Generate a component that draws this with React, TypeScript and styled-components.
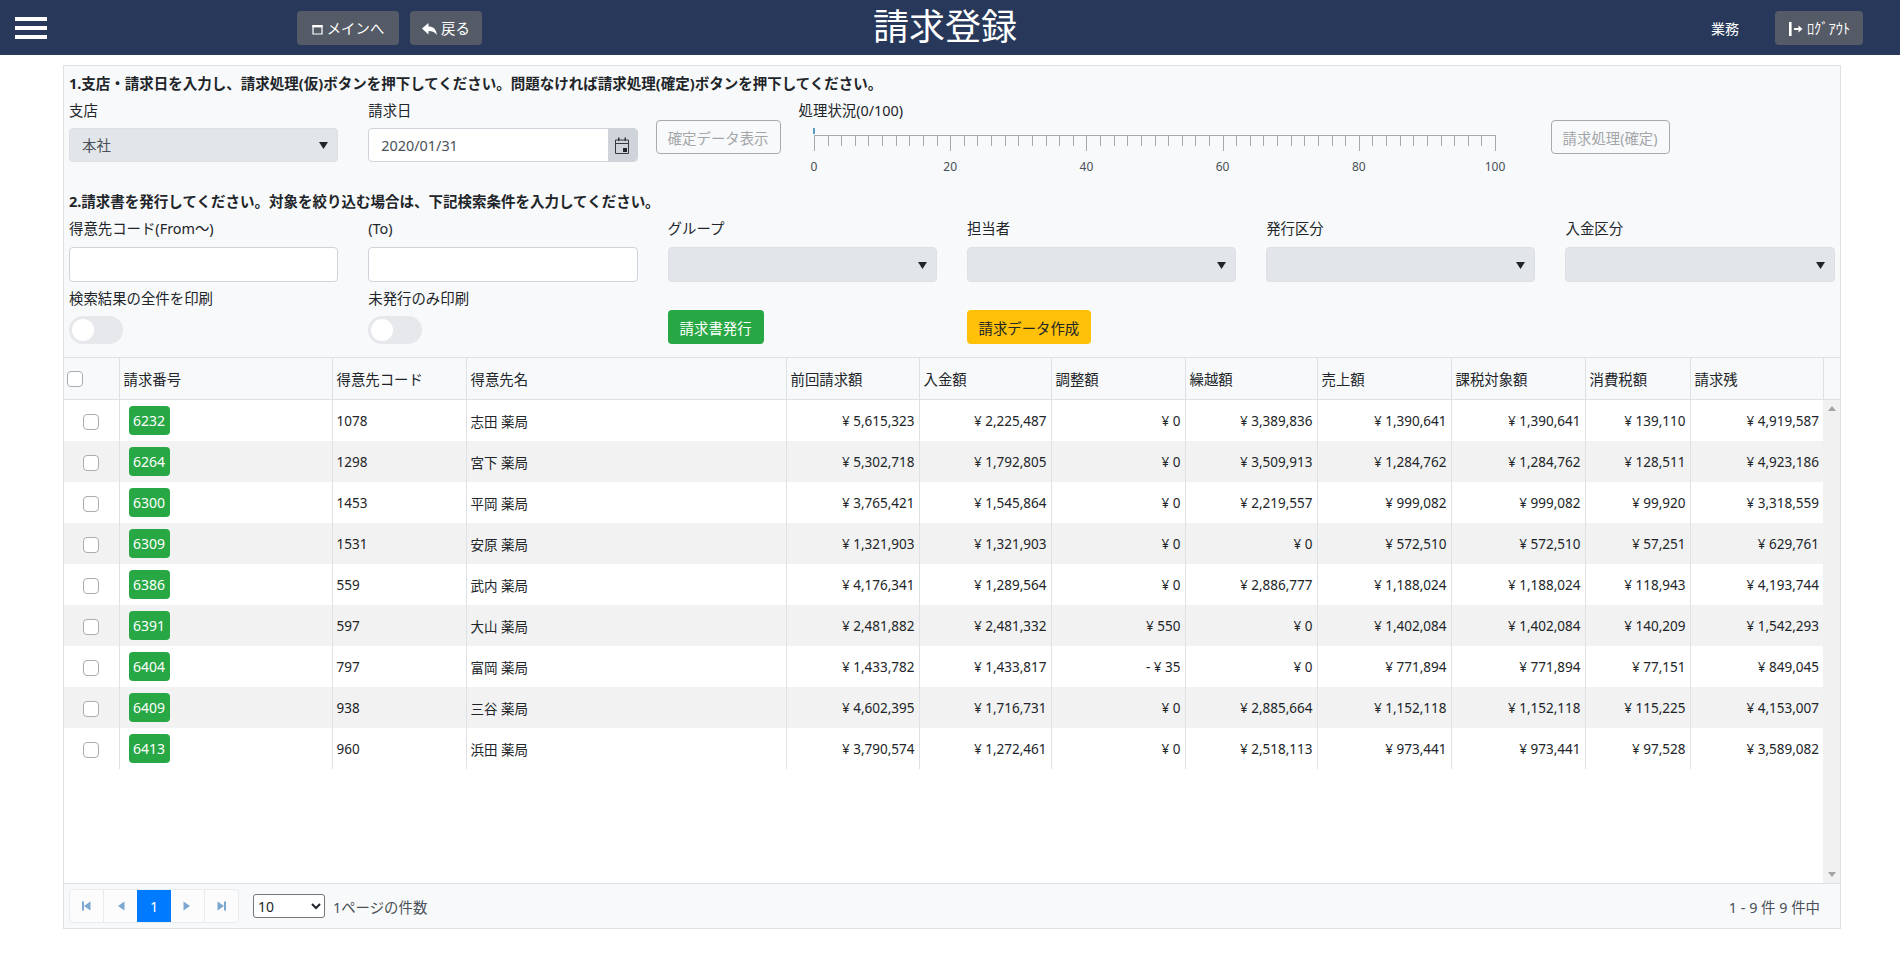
import React from "react";
import styled, { createGlobalStyle } from "styled-components";

const Global = createGlobalStyle`
  html, body { margin: 0; padding: 0; background: #fff; overflow: hidden; }
  body { font-family: "Noto Sans", "Noto Sans CJK JP", sans-serif; font-size: 14.4px; color: #212529; }
  * { box-sizing: border-box; }
`;

const Page = styled.div`
  width: 1900px;
  height: 960px;
  display: flex;
  flex-direction: column;
`;

const Header = styled.header`
  height: 55px;
  flex: none;
  background: #27385a;
  position: relative;
  display: flex;
  align-items: center;
  padding-left: 15px;
  padding-right: 37px;
`;

const Burger = styled.div`
  width: 32px;
  height: 22px;
  display: flex;
  flex-direction: column;
  justify-content: space-between;
  margin-right: 250px;
  span { display: block; height: 4px; background: #fff; }
`;

const HeadButton = styled.button`
  height: 34px;
  border: 0;
  border-radius: 4px;
  background: #555b66;
  color: #fff;
  font: inherit;
  display: inline-flex;
  align-items: center;
  justify-content: center;
  gap: 4px;
  padding: 0;
  width: ${(p: { $w: number }) => p.$w}px;
  margin-right: 11px;
  svg { position: relative; top: 1px; }
`;

const Title = styled.h1`
  position: absolute;
  left: 0;
  right: 10px;
  top: 0;
  height: 55px;
  margin: 0;
  text-align: center;
  font-size: 36px;
  font-weight: 400;
  line-height: 54px;
  color: #fff;
  pointer-events: none;
`;

const HeadRight = styled.div`
  margin-left: auto;
  display: flex;
  align-items: center;
  color: #fff;
  span { margin-right: 36px; font-size: 14px; }
  button { margin-right: 0; }
`;

const Panel = styled.main`
  margin: 10px 0 0 63px;
  width: 1778px;
  height: 864px;
  border: 1px solid #dee2e6;
  background: #f8f9fa;
  display: flex;
  flex-direction: column;
`;

const Form = styled.section`
  height: 291px;
  flex: none;
  padding: 7px 5px 0 5px;
`;

const Heading = styled.div`
  font-weight: 700;
  font-size: 14.5px;
  line-height: 21px;
  color: #212529;
`;

const TopRow = styled.div`
  display: flex;
  margin-top: 6px;
  height: 85px;
`;

const Field = styled.div`
  width: 269.3px;
  flex: none;
  margin-right: 30px;
`;

const Label = styled.label`
  display: block;
  line-height: 21px;
  height: 21px;
  margin-bottom: 7px;
  color: #212529;
  white-space: nowrap;
`;

const LowLabel = styled(Label)`
  margin-bottom: 8px;
`;

const SelectWrap = styled.div`
  position: relative;
  height: ${(p: { $h: number }) => p.$h}px;
  svg { position: absolute; right: 10px; top: 50%; margin-top: -3px; pointer-events: none; }
`;

const GreySelect = styled.select`
  appearance: none;
  width: 100%;
  height: 100%;
  border: 1px solid #dde0e4;
  border-radius: 4px;
  background: #e2e5e9;
  color: #495057;
  font: inherit;
  padding: 0 12px;
`;

const DateBox = styled.div`
  height: 34px;
  display: flex;
  border: 1px solid #ced4da;
  border-radius: 4px;
  overflow: hidden;
  background: #fff;
`;

const DateInput = styled.input`
  flex: 1;
  min-width: 0;
  border: 0;
  outline: 0;
  background: transparent;
  font: inherit;
  color: #495057;
  padding: 0 12px;
`;

const DateAddon = styled.span`
  width: 29px;
  background: #ced4da;
  display: flex;
  align-items: center;
  justify-content: center;
`;

const GhostButton = styled.button`
  width: ${(p: { $w: number }) => p.$w}px;
  height: 34px;
  flex: none;
  margin-top: 20px;
  border: 1px solid #a8abae;
  border-radius: 4px;
  background: transparent;
  color: #a3a6a9;
  font: inherit;
  padding: 0;
`;

const ConfirmShow = styled(GhostButton)`
  margin-left: -12px;
`;

const Progress = styled.div`
  width: 752px;
  flex: none;
  margin-left: 18px;
  svg { display: block; }
`;

const ProgressLabel = styled.div`
  line-height: 21px;
  height: 21px;
  white-space: nowrap;
`;

const Heading2 = styled(Heading)`
  margin-top: 6px;
`;

const FilterGrid = styled.div`
  display: grid;
  grid-template-columns: repeat(6, 269.3px);
  column-gap: 30px;
  margin-top: 6px;
`;

const TextInput = styled.input`
  display: block;
  width: 100%;
  height: 35px;
  border: 1px solid #ced4da;
  border-radius: 4px;
  background: #fff;
`;

const Toggle = styled.span`
  display: block;
  width: 54px;
  height: 28px;
  border-radius: 14px;
  background: #e6e8eb;
  position: relative;
  margin-top: -1px;
  &::after {
    content: "";
    position: absolute;
    left: 3px;
    top: 3px;
    width: 22px;
    height: 22px;
    border-radius: 50%;
    background: #fff;
  }
`;

const ToggleLabel = styled(LowLabel)`
  margin-top: 6px;
`;

const ActionCell = styled.div`
  margin-top: 28px;
`;

const Action = styled.button`
  height: 34px;
  border: 0;
  border-radius: 4px;
  font: inherit;
  padding: 0;
  width: ${(p: { $w: number }) => p.$w}px;
  background: ${(p: { $bg: string; $fg: string; $w: number }) => p.$bg};
  color: ${(p) => p.$fg};
`;

const Table = styled.table`
  table-layout: fixed;
  border-collapse: collapse;
  width: ${(p: { $w: number }) => p.$w}px;
`;

const HeadTh = styled.th`
  height: 42px;
  padding: 0 3px 0 4px;
  font-weight: 400;
  text-align: left;
  font-size: 14.4px;
  background: #f8f9fa;
  border-top: 1px solid #dee2e6;
  border-bottom: 1px solid #dee2e6;
  border-right: 1px solid #dee2e6;
  white-space: nowrap;
`;

const Check = styled.input.attrs({ type: "checkbox" })`
  appearance: none;
  display: block;
  width: 16px;
  height: 16px;
  margin: 0;
  background: #fff;
  border: 1px solid #a9adb1;
  border-radius: 4px;
`;

const HeadCheck = styled(Check)`
  margin-left: -1px;
`;

const RowCheck = styled(Check)`
  margin-top: 2px;
`;

const BodyArea = styled.div`
  flex: 1;
  min-height: 0;
  display: flex;
  background: #fff;
`;

const BodyScroll = styled.div`
  flex: 1;
  min-width: 0;
`;

const Row = styled.tr`
  background: ${(p: { $alt: boolean }) => (p.$alt ? "#f2f2f2" : "#fff")};
`;

const Td = styled.td`
  height: 41px;
  padding: 0 4px 0 4px;
  font-size: 13.5px;
  color: #212529;
  border-right: 1px solid #dee2e6;
  white-space: nowrap;
  text-align: ${(p: { $num?: boolean }) => (p.$num ? "right" : "left")};
  &:last-child { border-right: 0; }
`;

const CheckTd = styled(Td)`
  padding: 0 0 0 19px;
`;

const IdBadge = styled.button`
  display: block;
  width: 41px;
  height: 29px;
  margin: -1px 0 0 5px;
  border: 0;
  border-radius: 4px;
  background: #28a745;
  color: #fff;
  font: inherit;
  font-size: 14px;
  padding: 0;
`;

const Scrollbar = styled.div`
  width: 17px;
  flex: none;
  background: #f1f1f1;
  display: flex;
  flex-direction: column;
  justify-content: space-between;
  align-items: center;
  padding: 6px 0;
`;

const Arrow = styled.span`
  width: 0;
  height: 0;
  border-left: 4px solid transparent;
  border-right: 4px solid transparent;
  ${(p: { $up?: boolean }) =>
    p.$up ? "border-bottom: 5px solid #a3a3a3;" : "border-top: 5px solid #a3a3a3;"}
`;

const Footer = styled.footer`
  height: 45px;
  flex: none;
  border-top: 1px solid #dee2e6;
  background: #f8f9fa;
  display: flex;
  align-items: center;
  padding: 0 20px 0 5px;
`;

const Pager = styled.div`
  display: flex;
  width: 170px;
  height: 34px;
  border: 1px solid #e9ecef;
  border-radius: 4px;
  background: #fcfcfd;
  overflow: hidden;
`;

const PageCell = styled.span`
  flex: 1;
  display: flex;
  align-items: center;
  justify-content: center;
  border-left: ${(p: { $active?: boolean; $first?: boolean }) =>
    p.$first || p.$active ? "0" : "1px solid #e9ecef"};
  background: ${(p) => (p.$active ? "#007bff" : "transparent")};
  color: ${(p) => (p.$active ? "#fff" : "#7ba7d0")};
`;

const PageSize = styled.select`
  width: 72px;
  height: 24px;
  margin-left: 14px;
  border: 1px solid #767676;
  border-radius: 3px;
  background: #fff;
  font-family: "Noto Sans", sans-serif;
  font-size: 14px;
  color: #212529;
`;

const PageSizeLabel = styled.span`
  margin-left: 8px;
  color: #495057;
`;

const PageInfo = styled.span`
  margin-left: auto;
  color: #495057;
`;

const widths = [55, 213, 134, 320, 133, 132, 134, 132, 134, 134, 105, 133];
const heads = ["", "請求番号", "得意先コード", "得意先名", "前回請求額", "入金額", "調整額", "繰越額", "売上額", "課税対象額", "消費税額", "請求残"];

const rows: string[][] = [
  ["6232", "1078", "志田 薬局", "¥ 5,615,323", "¥ 2,225,487", "¥ 0", "¥ 3,389,836", "¥ 1,390,641", "¥ 1,390,641", "¥ 139,110", "¥ 4,919,587"],
  ["6264", "1298", "宮下 薬局", "¥ 5,302,718", "¥ 1,792,805", "¥ 0", "¥ 3,509,913", "¥ 1,284,762", "¥ 1,284,762", "¥ 128,511", "¥ 4,923,186"],
  ["6300", "1453", "平岡 薬局", "¥ 3,765,421", "¥ 1,545,864", "¥ 0", "¥ 2,219,557", "¥ 999,082", "¥ 999,082", "¥ 99,920", "¥ 3,318,559"],
  ["6309", "1531", "安原 薬局", "¥ 1,321,903", "¥ 1,321,903", "¥ 0", "¥ 0", "¥ 572,510", "¥ 572,510", "¥ 57,251", "¥ 629,761"],
  ["6386", "559", "武内 薬局", "¥ 4,176,341", "¥ 1,289,564", "¥ 0", "¥ 2,886,777", "¥ 1,188,024", "¥ 1,188,024", "¥ 118,943", "¥ 4,193,744"],
  ["6391", "597", "大山 薬局", "¥ 2,481,882", "¥ 2,481,332", "¥ 550", "¥ 0", "¥ 1,402,084", "¥ 1,402,084", "¥ 140,209", "¥ 1,542,293"],
  ["6404", "797", "富岡 薬局", "¥ 1,433,782", "¥ 1,433,817", "- ¥ 35", "¥ 0", "¥ 771,894", "¥ 771,894", "¥ 77,151", "¥ 849,045"],
  ["6409", "938", "三谷 薬局", "¥ 4,602,395", "¥ 1,716,731", "¥ 0", "¥ 2,885,664", "¥ 1,152,118", "¥ 1,152,118", "¥ 115,225", "¥ 4,153,007"],
  ["6413", "960", "浜田 薬局", "¥ 3,790,574", "¥ 1,272,461", "¥ 0", "¥ 2,518,113", "¥ 973,441", "¥ 973,441", "¥ 97,528", "¥ 3,589,082"],
];

const Caret = () => (
  <svg width="9" height="7" viewBox="0 0 9 7"><path d="M0 0h9L4.5 7z" fill="#212529" /></svg>
);

const WindowIcon = () => (
  <svg width="11" height="12" viewBox="0 0 11 12" fill="none">
    <path d="M1 2.5h9v8.5H1z" stroke="#fff" strokeWidth="1.2" />
    <path d="M.5 2h10v2.4H.5z" fill="#fff" />
  </svg>
);

const ReplyIcon = () => (
  <svg width="15" height="14" viewBox="0 0 15 14">
    <path d="M0 6.5 6.5 1v3.4C11 4.4 14 6.5 15 13 13 10.2 10.5 9 6.5 9v3.5z" fill="#fff" />
  </svg>
);

const LogoutIcon = () => (
  <svg width="15" height="16" viewBox="0 0 15 16">
    <path d="M1 1h2.6v14H1z" fill="#fff" />
    <path d="M6 7h4.5V4.5L14.5 8l-4 3.5V9H6z" fill="#fff" />
  </svg>
);

const CalendarIcon = () => (
  <svg width="14" height="17" viewBox="0 0 14 17" fill="none">
    <path d="M.5 3h13v13.5H.5zM.5 6.5h13" stroke="#343a40" />
    <path d="M3 .5h1.5V4H3zM9.5 .5H11V4H9.5z" fill="#343a40" />
    <path d="M8 11h4v4H8z" fill="#212529" />
  </svg>
);

const PagerIcon = ({ dir, bar }: { dir: "l" | "r"; bar?: boolean }) => (
  <svg width="10" height="10" viewBox="0 0 10 10" fill="#7ba7d0">
    {dir === "l" ? <path d="M8.5 .5v9L2 5z" /> : <path d="M1.5 .5v9L8 5z" />}
    {bar && (dir === "l" ? <path d="M0 .5h2v9H0z" /> : <path d="M8 .5h2v9H8z" />)}
  </svg>
);

const Scale = () => {
  const left = 15;
  const step = 13.62;
  const ticks = Array.from({ length: 51 }, (_, i) => i);
  return (
    <svg width="720" height="56" viewBox="0 0 720 56">
      <rect x={left - 1} y="7" width="2" height="6" fill="#5b9bc4" />
      <path d={`M${left} 14.5H${left + 50 * step}`} stroke="#a8a8a8" />
      {ticks.map((i) => {
        const x = Math.round(left + i * step) + 0.5;
        return <path key={i} d={`M${x} 14V${i % 10 === 0 ? 30 : 25}`} stroke="#a8a8a8" />;
      })}
      {[0, 20, 40, 60, 80, 100].map((v, i) => (
        <text key={v} x={left + i * 10 * step} y="50" textAnchor="middle" fontSize="12" fill="#495057" fontFamily="Noto Sans, sans-serif">{v}</text>
      ))}
    </svg>
  );
};

const Select = ({ h, value }: { h: number; value?: string }) => (
  <SelectWrap $h={h}>
    <GreySelect defaultValue={value ?? ""}>
      <option value={value ?? ""}>{value ?? ""}</option>
    </GreySelect>
    <Caret />
  </SelectWrap>
);

export default function App() {
  return (
    <Page>
      <Global />
      <Header>
        <Burger><span /><span /><span /></Burger>
        <HeadButton $w={102}><WindowIcon />メインへ</HeadButton>
        <HeadButton $w={72}><ReplyIcon />戻る</HeadButton>
        <Title>請求登録</Title>
        <HeadRight>
          <span>業務</span>
          <HeadButton $w={88}><LogoutIcon />ﾛｸﾞｱｳﾄ</HeadButton>
        </HeadRight>
      </Header>
      <Panel>
        <Form>
          <Heading>1.支店・請求日を入力し、請求処理(仮)ボタンを押下してください。問題なければ請求処理(確定)ボタンを押下してください。</Heading>
          <TopRow>
            <Field>
              <Label>支店</Label>
              <Select h={34} value="本社" />
            </Field>
            <Field>
              <Label>請求日</Label>
              <DateBox>
                <DateInput defaultValue="2020/01/31" />
                <DateAddon><CalendarIcon /></DateAddon>
              </DateBox>
            </Field>
            <ConfirmShow $w={125}>確定データ表示</ConfirmShow>
            <Progress>
              <ProgressLabel>処理状況(0/100)</ProgressLabel>
              <Scale />
            </Progress>
            <GhostButton $w={119}>請求処理(確定)</GhostButton>
          </TopRow>
          <Heading2>2.請求書を発行してください。対象を絞り込む場合は、下記検索条件を入力してください。</Heading2>
          <FilterGrid>
            <div><LowLabel>得意先コード(From～)</LowLabel><TextInput /></div>
            <div><LowLabel>(To)</LowLabel><TextInput /></div>
            <div><LowLabel>グループ</LowLabel><Select h={35} /></div>
            <div><LowLabel>担当者</LowLabel><Select h={35} /></div>
            <div><LowLabel>発行区分</LowLabel><Select h={35} /></div>
            <div><LowLabel>入金区分</LowLabel><Select h={35} /></div>
            <div><ToggleLabel>検索結果の全件を印刷</ToggleLabel><Toggle /></div>
            <div><ToggleLabel>未発行のみ印刷</ToggleLabel><Toggle /></div>
            <ActionCell><Action $w={96} $bg="#28a745" $fg="#fff">請求書発行</Action></ActionCell>
            <ActionCell><Action $w={124} $bg="#ffc107" $fg="#212529">請求データ作成</Action></ActionCell>
          </FilterGrid>
        </Form>
        <Table $w={1776}>
          <colgroup>
            {widths.map((w, i) => <col key={i} style={{ width: w }} />)}
            <col style={{ width: 17 }} />
          </colgroup>
          <thead>
            <tr>
              {heads.map((h, i) => (
                <HeadTh key={i}>{i === 0 ? <HeadCheck /> : h}</HeadTh>
              ))}
              <HeadTh />
            </tr>
          </thead>
        </Table>
        <BodyArea>
          <BodyScroll>
            <Table $w={1759}>
              <colgroup>
                {widths.map((w, i) => <col key={i} style={{ width: w }} />)}
              </colgroup>
              <tbody>
                {rows.map((r, i) => (
                  <Row key={r[0]} $alt={i % 2 === 1}>
                    <CheckTd><RowCheck /></CheckTd>
                    <Td><IdBadge>{r[0]}</IdBadge></Td>
                    {r.slice(1).map((c, j) => (
                      <Td key={j} $num={j >= 2}>{c}</Td>
                    ))}
                  </Row>
                ))}
              </tbody>
            </Table>
          </BodyScroll>
          <Scrollbar><Arrow $up /><Arrow /></Scrollbar>
        </BodyArea>
        <Footer>
          <Pager>
            <PageCell $first><PagerIcon dir="l" bar /></PageCell>
            <PageCell><PagerIcon dir="l" /></PageCell>
            <PageCell $active>1</PageCell>
            <PageCell $first><PagerIcon dir="r" /></PageCell>
            <PageCell><PagerIcon dir="r" bar /></PageCell>
          </Pager>
          <PageSize defaultValue="10"><option value="10">10</option><option value="20">20</option></PageSize>
          <PageSizeLabel>1ページの件数</PageSizeLabel>
          <PageInfo>1 - 9 件 9 件中</PageInfo>
        </Footer>
      </Panel>
    </Page>
  );
}
